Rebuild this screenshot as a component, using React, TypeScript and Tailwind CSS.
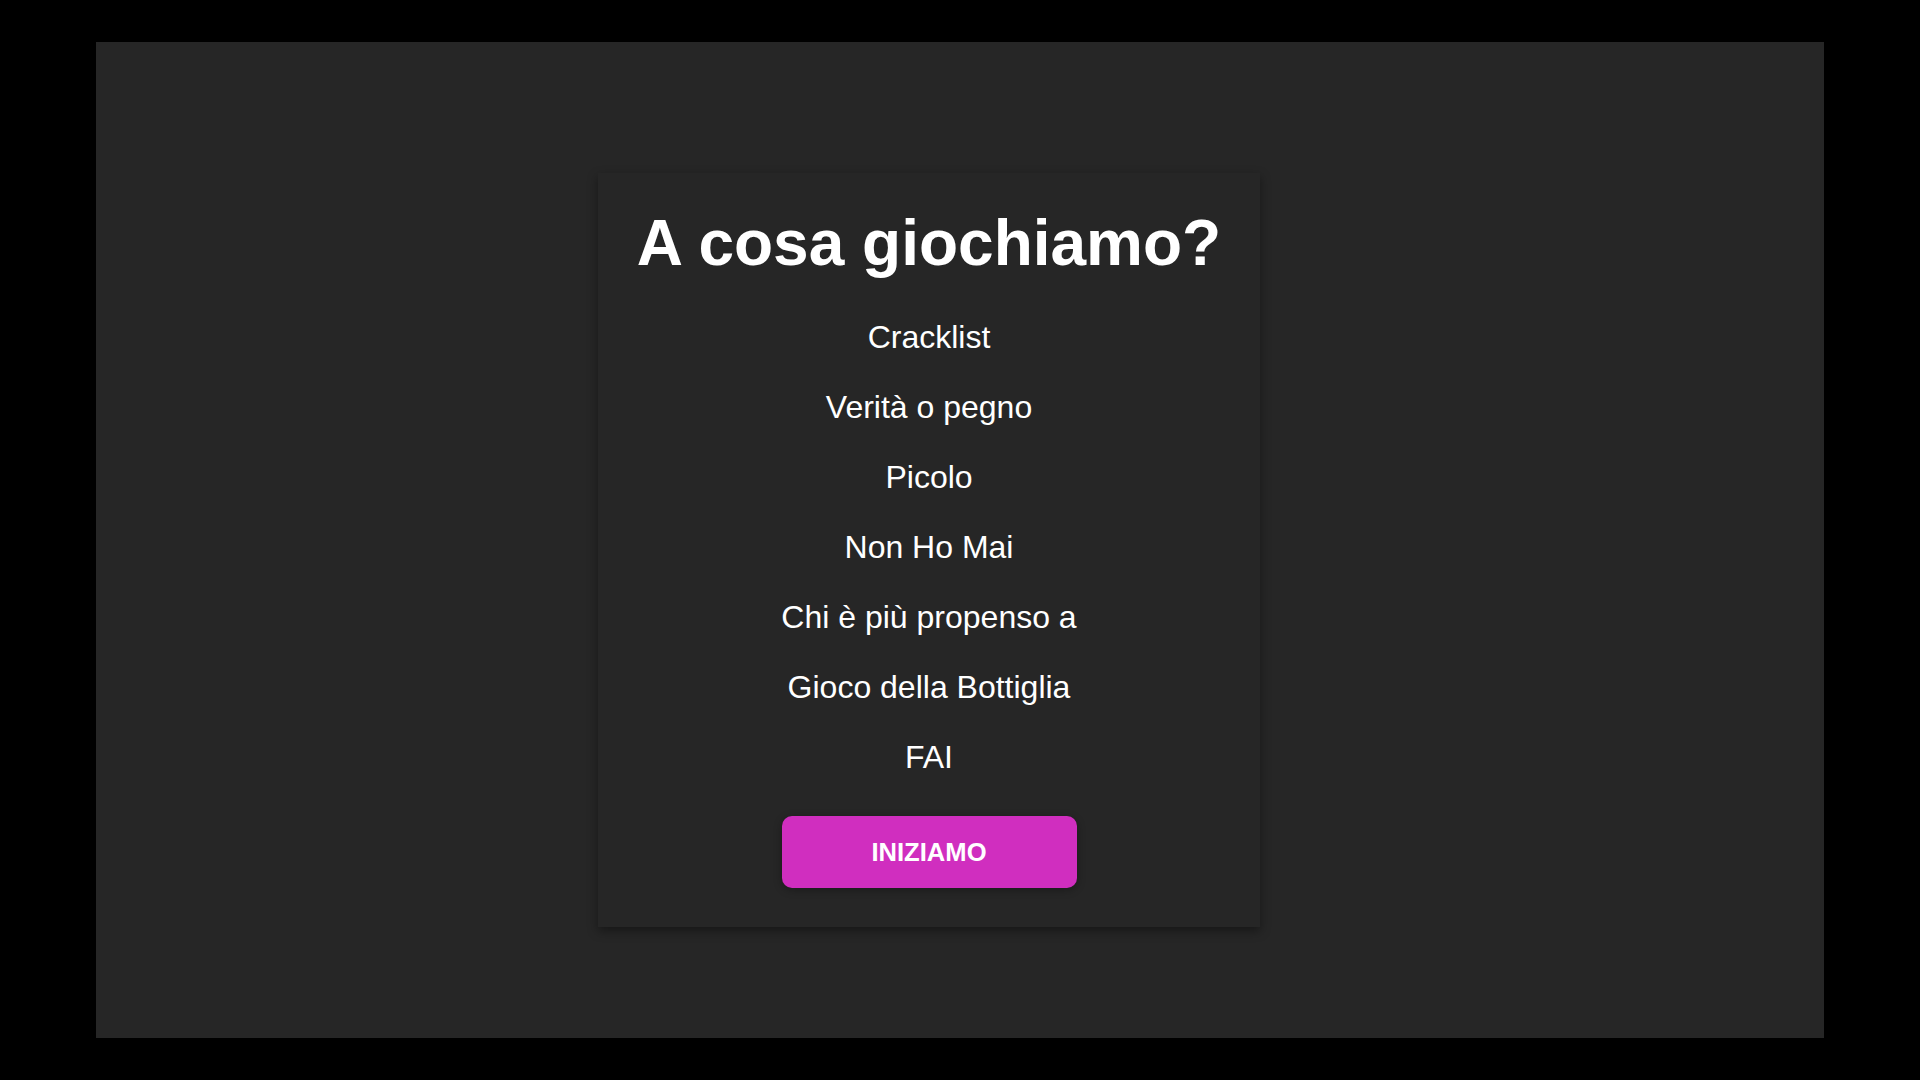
import React from "react";

const games = [
  "Cracklist",
  "Verità o pegno",
  "Picolo",
  "Non Ho Mai",
  "Chi è più propenso a",
  "Gioco della Bottiglia",
  "FAI",
];

export default function App() {
  return (
    <div className="min-h-screen w-full bg-black px-[96px] py-[42px] font-['Liberation_Sans',Arial,sans-serif]">
      <div className="flex h-[996px] w-full items-start bg-[#262626] pl-[502px] pt-[131px]">
        <div className="flex w-[662px] flex-col items-center bg-[#262626] pt-[33px] pb-[39px] text-white shadow-[0_4px_10px_rgba(0,0,0,0.4)]">
          <h1 className="text-[64px] font-bold leading-[74px]">
            A cosa giochiamo?
          </h1>
          <ul className="mt-[39px] flex flex-col items-center gap-[33px]">
            {games.map((g) => (
              <li key={g} className="text-[32px] leading-[37px]">
                {g}
              </li>
            ))}
          </ul>
          <button className="mt-[40px] h-[72px] w-[295px] rounded-[10px] bg-[#d02ebf] text-[25.6px] font-bold text-white shadow-[0_2px_8px_rgba(0,0,0,0.3)]">
            INIZIAMO
          </button>
        </div>
      </div>
    </div>
  );
}
